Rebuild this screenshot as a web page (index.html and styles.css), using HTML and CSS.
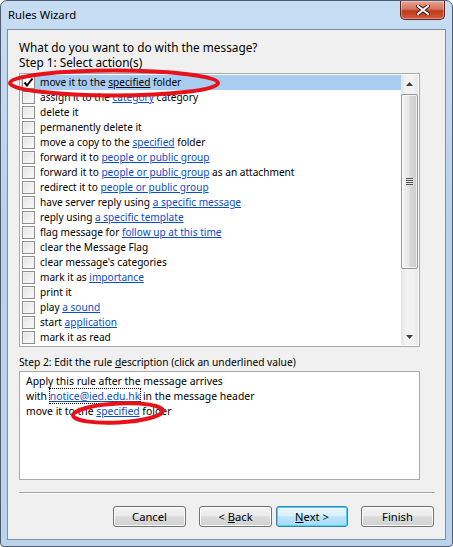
FILE: index.html
```html
<!DOCTYPE html>
<html lang="en">
<head>
  <meta charset="UTF-8">
  <title>Rules Wizard</title>
  <link rel="stylesheet" href="styles.css">
</head>
<body>
  <div class="window">
    <div class="titlebar">
      <span class="title">Rules Wizard</span>
      <div class="close-btn">
        <svg width="14" height="10" viewBox="0 0 14 10">
          <path d="M2 1 L12 9 M12 1 L2 9" stroke="#4a1410" stroke-width="4" stroke-linecap="square"/>
          <path d="M2 1 L12 9 M12 1 L2 9" stroke="#fff" stroke-width="2" stroke-linecap="square"/>
        </svg>
      </div>
    </div>

    <div class="client">
      <div class="label">What do you want to do with the message?</div>
      <div class="label">Step 1: Select action(s)</div>

      <div class="listbox">
        <div class="rows">
          <div class="row selected"><span class="check on"><svg width="11" height="11" viewBox="0 0 11 11"><path d="M1.5 5.5 L4 8.5 L9.5 1.5" fill="none" stroke="#000" stroke-width="2"/></svg></span>move it to the <a>specified</a> folder</div>
          <div class="row"><span class="check"></span>assign it to the <a>category</a> category</div>
          <div class="row"><span class="check"></span>delete it</div>
          <div class="row"><span class="check"></span>permanently delete it</div>
          <div class="row"><span class="check"></span>move a copy to the <a>specified</a> folder</div>
          <div class="row"><span class="check"></span>forward it to <a>people or public group</a></div>
          <div class="row"><span class="check"></span>forward it to <a>people or public group</a> as an attachment</div>
          <div class="row"><span class="check"></span>redirect it to <a>people or public group</a></div>
          <div class="row"><span class="check"></span>have server reply using <a>a specific message</a></div>
          <div class="row"><span class="check"></span>reply using <a>a specific template</a></div>
          <div class="row"><span class="check"></span>flag message for <a>follow up at this time</a></div>
          <div class="row"><span class="check"></span>clear the Message Flag</div>
          <div class="row"><span class="check"></span>clear message's categories</div>
          <div class="row"><span class="check"></span>mark it as <a>importance</a></div>
          <div class="row"><span class="check"></span>print it</div>
          <div class="row"><span class="check"></span>play <a>a sound</a></div>
          <div class="row"><span class="check"></span>start <a>application</a></div>
          <div class="row"><span class="check"></span>mark it as read</div>
        </div>
        <div class="scrollbar">
          <div class="arrow">
            <svg width="7" height="4" viewBox="0 0 7 4"><path d="M0 4 L3.5 0 L7 4 Z" fill="#404040"/></svg>
          </div>
          <div class="thumb">
            <span class="grip"></span>
          </div>
          <div class="track"></div>
          <div class="arrow">
            <svg width="7" height="4" viewBox="0 0 7 4"><path d="M0 0 L3.5 4 L7 0 Z" fill="#404040"/></svg>
          </div>
        </div>
      </div>

      <div class="label step2">Step 2: Edit the rule <u>d</u>escription (click an underlined value)</div>
      <div class="desc">
        <div class="line">Apply this rule after the message arrives</div>
        <div class="line">with <a class="focused">notice@ied.edu.hk</a> in the message header</div>
        <div class="line">move it to the <a>specified</a> folder</div>
      </div>

      <div class="separator"></div>

      <div class="buttons">
        <button class="btn">Cancel</button>
        <button class="btn gap-left">&lt; <u>B</u>ack</button>
        <button class="btn default"><u>N</u>ext &gt;</button>
        <button class="btn gap-left">Finish</button>
      </div>
    </div>

    <!-- hand-drawn markers over the dialog -->
    <svg class="marks" width="453" height="547" viewBox="0 0 453 547">
      <ellipse cx="114" cy="83" rx="104" ry="12.5" fill="none" stroke="#e8121b" stroke-width="4"/>
      <ellipse cx="118" cy="413" rx="45" ry="9.5" fill="none" stroke="#e8121b" stroke-width="4" transform="rotate(-3 118 413)"/>
    </svg>
  </div>
</body>
</html>
```

FILE: styles.css
```css
* {
  box-sizing: border-box;
}
body {
  margin: 0;
  font-family: 'Noto Sans', 'Segoe UI', sans-serif;
  font-size: 11.8px;
  color: #000;
  background: #fff;
}
.window {
  position: relative;
  width: 453px;
  height: 547px;
  display: flex;
  flex-direction: column;
  padding: 0 6px 6px;
  border: 1px solid #4d5c6e;
  border-radius: 7px 7px 4px 4px;
  background: linear-gradient(#c7ddf3, #b8d2ee 40%, #bad4ef);
}
.titlebar {
  height: 28px;
  display: flex;
  align-items: flex-start;
  justify-content: space-between;
}
.title {
  margin-top: 6px;
  margin-left: 1px;
  font-size: 11.3px;
  color: #000;
}
.close-btn {
  width: 45px;
  height: 19px;
  margin-right: 1px;
  display: flex;
  align-items: center;
  justify-content: center;
  border: 1px solid #5a2621;
  border-top: none;
  border-radius: 0 0 5px 5px;
  background: linear-gradient(#e8a494, #d4735e 45%, #c0391d 55%, #d25b3a);
  box-shadow: inset 0 0 0 1px rgba(255, 255, 255, 0.35);
}
.client {
  flex: 1;
  display: flex;
  flex-direction: column;
  padding: 10px 10px 0 11px;
  border: 1px solid #7d8ea2;
  background: #f0f0f0;
}
.label {
  line-height: 15px;
  height: 15px;
}
.listbox {
  margin-top: 3px;
  width: 401px;
  height: 274px;
  display: flex;
  padding: 1px;
  border: 1px solid #a9a9a9;
  background: #fff;
  font-size: 10.1px;
}
.rows {
  flex: 1;
}
.row {
  height: 15px;
  line-height: 15px;
  display: flex;
  align-items: center;
  white-space: pre;
}
.row.selected {
  background: #a8cdf1;
}
.row a {
  color: #0b4cc8;
  text-decoration: underline;
}
.row.selected a {
  color: #000;
}
.check {
  width: 13px;
  height: 13px;
  margin: 0 5px 0 1px;
  display: flex;
  align-items: center;
  justify-content: center;
  border: 1px solid #8e8f8f;
  background: linear-gradient(135deg, #e3e3e3, #fbfbfb);
  box-shadow: inset 0 0 0 1px #f4f4f4;
}
.check.on {
  background: #fff;
}
.scrollbar {
  width: 17px;
  display: flex;
  flex-direction: column;
  background: linear-gradient(90deg, #e4e4e4, #f2f2f2 30%, #f2f2f2 70%, #e8e8e8);
}
.arrow {
  height: 17px;
  display: flex;
  align-items: center;
  justify-content: center;
}
.thumb {
  margin: 2px 0 0;
  height: 175px;
  display: flex;
  align-items: center;
  justify-content: center;
  border: 1px solid #979797;
  border-radius: 2px;
  background: linear-gradient(90deg, #f5f5f5, #e6e6e6 45%, #d8d8d8 55%, #cdcdcd);
  box-shadow: inset 0 0 0 1px rgba(255, 255, 255, 0.7);
}
.grip {
  width: 7px;
  height: 7px;
  background: repeating-linear-gradient(#505050 0 1px, #e8e8e8 1px 2px);
}
.track {
  flex: 1;
}
.step2 {
  margin-top: 8px;
  font-size: 10.2px;
}
.step2 u {
  text-decoration: underline;
}
.desc {
  margin-top: 1px;
  width: 401px;
  height: 109px;
  padding: 2px 6px;
  border: 1px solid #a9a9a9;
  background: #fff;
  font-size: 10.4px;
}
.line {
  height: 15px;
  line-height: 15px;
  white-space: nowrap;
}
.desc a {
  color: #0b4cc8;
  text-decoration: underline;
}
.desc a.focused {
  outline: 1px dotted #000;
}
.separator {
  margin-top: 12px;
  height: 2px;
  border-top: 1px solid #a0a0a0;
  border-bottom: 1px solid #fff;
}
.buttons {
  margin-top: 12px;
  padding-right: 1px;
  display: flex;
  justify-content: flex-end;
  gap: 4px;
}
.btn {
  width: 73px;
  height: 21px;
  padding: 0;
  font-family: inherit;
  font-size: 11.2px;
  color: #000;
  border: 1px solid #707070;
  border-radius: 3px;
  background: linear-gradient(#f2f2f2, #ebebeb 50%, #dddddd 50%, #cfcfcf);
  box-shadow: inset 0 0 0 1px #fcfcfc;
}
.btn.gap-left {
  margin-left: 9px;
}
.btn.default {
  width: 72px;
  border-color: #3c7fb1;
  box-shadow: inset 0 0 0 1px #48d7fb;
  background: linear-gradient(#eaf6fd, #d9f0fc 50%, #bee6fd 50%, #a7d9f5);
}
.marks {
  position: absolute;
  left: -1px;
  top: -1px;
  pointer-events: none;
}
```
